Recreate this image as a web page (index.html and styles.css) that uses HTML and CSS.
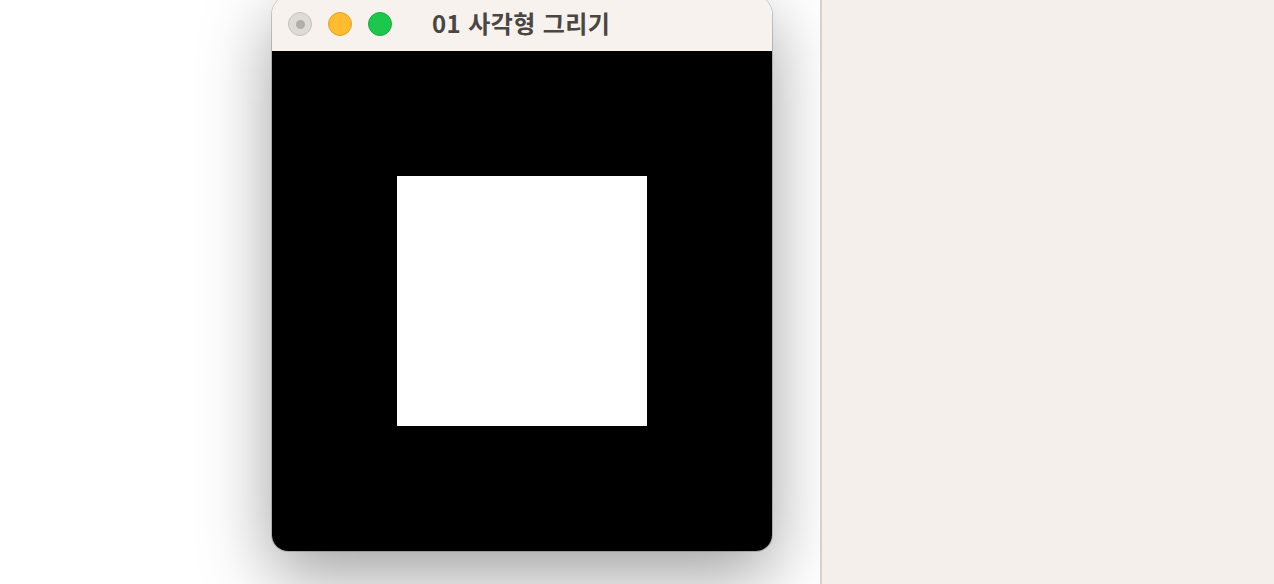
FILE: index.html
```html
<!DOCTYPE html>
<html lang="ko">
<head>
    <meta charset="UTF-8">
    <title>01 사각형 그리기</title>
    <link rel="stylesheet" href="styles.css">
</head>
<body>
    <div class="desk">
        <div class="win">
            <div class="titlebar">
                <div class="lights">
                    <span class="light close"><i></i></span>
                    <span class="light min"></span>
                    <span class="light max"></span>
                </div>
                <div class="title">01 사각형 그리기</div>
            </div>
            <div class="canvas">
                <div class="rect"></div>
            </div>
        </div>
    </div>
    <div class="side"></div>
</body>
</html>
```
FILE: styles.css
```css
*{
    padding: 0;
    margin: 0;
    box-sizing: border-box;
}
html,body{
    height: 100%;
    overflow: hidden;
}
body{
    display: flex;
    background: #fff;
    font-family: "Noto Sans CJK KR", "Noto Sans", sans-serif;
}
.desk{
    width: 820px;
    height: 100%;
    padding-left: 272px;
    background: #fff;
    overflow: hidden;
}
.win{
    width: 500px;
    margin-top: -5px;
    border-radius: 20px 20px 16px 16px;
    overflow: hidden;
    box-shadow: 0 0 0 1px rgba(0,0,0,0.18), 0 24px 70px rgba(0,0,0,0.38);
}
.titlebar{
    height: 56px;
    background: #f7f2ed;
    display: flex;
    align-items: center;
    padding: 2px 0 0 16px;
}
.lights{
    display: flex;
    gap: 16px;
}
.light{
    width: 24px;
    height: 24px;
    border-radius: 50%;
    display: flex;
    align-items: center;
    justify-content: center;
}
.close{
    background: #dedad6;
    border: 1px solid #c4c0bc;
}
.close i{
    width: 9px;
    height: 9px;
    border-radius: 50%;
    background: #b0adaa;
}
.min{
    background: #febc2e;
    border: 1px solid #e0a228;
}
.max{
    background: #1bc84b;
    border: 1px solid #16ae3f;
}
.title{
    margin-left: 40px;
    margin-top: -4px;
    font-size: 24px;
    font-weight: 700;
    color: #4a4644;
    letter-spacing: 0.4px;
}
.canvas{
    height: 500px;
    background: #000;
    display: flex;
    align-items: center;
    justify-content: center;
}
.rect{
    width: 250px;
    height: 250px;
    background: #fff;
}
.side{
    flex: 1;
    height: 100%;
    background: #f4efeb;
    border-left: 2px solid #d6d1cd;
}
```
